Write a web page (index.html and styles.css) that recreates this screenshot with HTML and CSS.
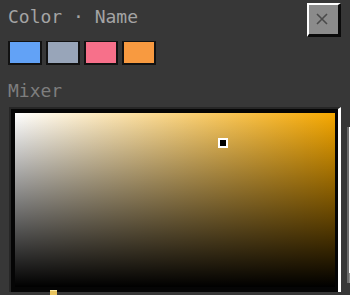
FILE: index.html
```html
<!DOCTYPE html>
<html>
<head>
<meta charset="utf-8">
<link rel="stylesheet" href="styles.css">
</head>
<body>
<div class="header">
  <div class="title">Color · Name</div>
  <button class="close" aria-label="Close">
    <svg width="12" height="12" viewBox="0 0 12 12"><path d="M1 1 L11 11 M11 1 L1 11" stroke="#4a4a4a" stroke-width="1.6" fill="none"/></svg>
  </button>
</div>
<div class="swatches">
  <div class="swatch s-blue"></div>
  <div class="swatch s-gray"></div>
  <div class="swatch s-pink"></div>
  <div class="swatch s-orange"></div>
</div>
<div class="label">Mixer</div>
<div class="mixer-row">
  <div class="mixer">
    <div class="sv">
      <div class="cursor" style="left:203px;top:25px"></div>
    </div>
    <div class="hue-thumb" style="left:39px"></div>
  </div>
  <div class="side">
    <div class="side-track"></div>
    <div class="side-foot"></div>
  </div>
</div>
</body>
</html>
```
FILE: styles.css
```css
html, body {
  margin: 0;
  overflow: hidden;
  background: #373737;
}
body {
  width: 350px;
  height: 295px;
  padding: 3px 0 0 8px;
  box-sizing: border-box;
  font-family: "DejaVu Sans Mono", "Liberation Mono", monospace;
}
.header {
  display: flex;
  justify-content: space-between;
  align-items: flex-start;
  width: 333px;
  height: 34px;
}
.title {
  margin-top: 5px;
  font-size: 18px;
  line-height: 18px;
  color: #a4a4a4;
}
.close {
  width: 34px;
  height: 34px;
  padding: 0;
  box-sizing: border-box;
  background: #8b8b8b;
  border-style: solid;
  border-width: 2px 3px 3px 2px;
  border-color: #ffffff #0a0a0a #0a0a0a #ffffff;
  display: flex;
  align-items: center;
  justify-content: center;
  padding-right: 3px;
  padding-bottom: 2px;
}
.close svg { display: block; }
.swatches {
  display: flex;
  gap: 4px;
  margin-top: 4px;
}
.swatch {
  width: 34px;
  height: 24px;
  box-sizing: border-box;
  border: 2px solid #121212;
  border-top-width: 1px;
}
.s-blue { background: #62a2f6; }
.s-gray { background: #98a5b9; }
.s-pink { background: #f7708a; }
.s-orange { background: #f89a40; }
.label {
  margin-top: 17px;
  font-size: 18px;
  line-height: 18px;
  color: #7e7e7e;
}
.mixer-row {
  display: flex;
  gap: 6px;
  margin-top: 7px;
  margin-left: 1px;
}
.mixer {
  position: relative;
  flex: none;
  width: 332px;
  box-sizing: border-box;
  background: #050505;
  border-style: solid;
  border-width: 2px 3px 0 2px;
  border-color: #262626 #ffffff #262626 #262626;
  padding: 4px 3px 5px 4px;
}
.sv {
  position: relative;
  height: 174px;
  background:
    linear-gradient(to top, #000 0%, rgba(0,0,0,0) 100%),
    linear-gradient(to right, #ffffff 0%, #f6a800 100%);
}
.cursor {
  position: absolute;
  width: 10px;
  height: 10px;
  box-sizing: border-box;
  border: 2px solid #ffffff;
  background: #000;
}
.hue-thumb {
  position: absolute;
  top: 181px;
  width: 7px;
  height: 4px;
  background: #e7c25c;
  border-top: 1px solid #f8e7a2;
}
.side {
  flex: none;
  width: 20px;
  margin-top: 20px;
}
.side-track {
  height: 146px;
  background: #ffffff;
  border-left: 2px solid #6c6c6c;
}
.side-foot {
  height: 10px;
  background: #8b8b8b;
  border-left: 2px solid #6c6c6c;
}
```
